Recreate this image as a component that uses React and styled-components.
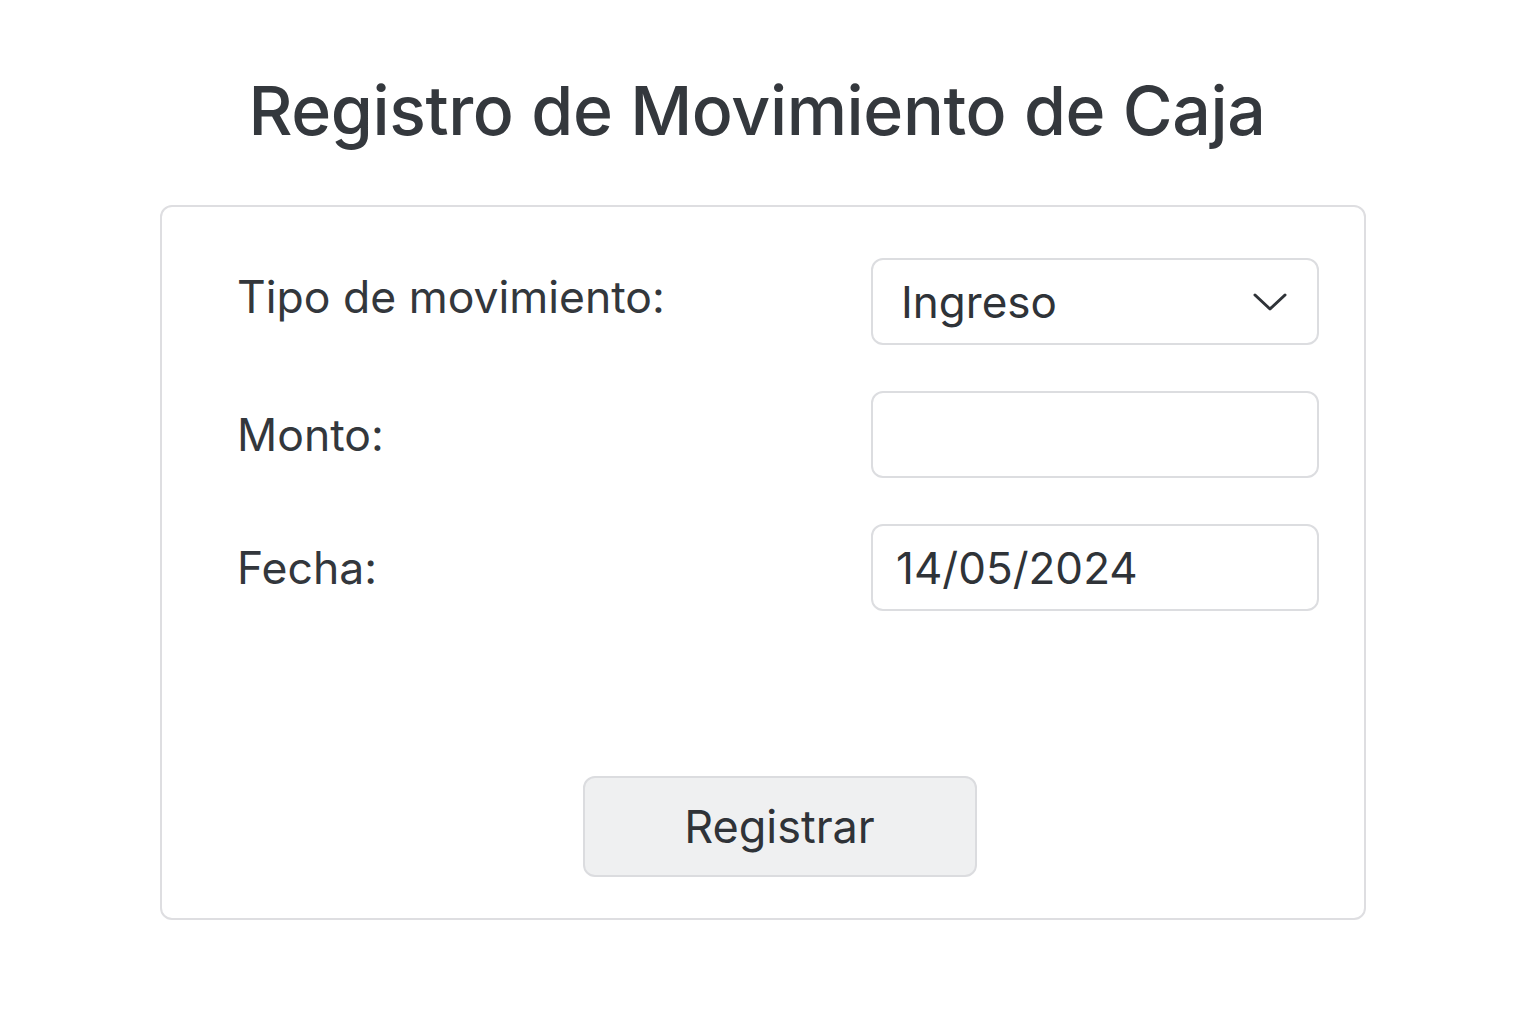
import React from "react";
import styled, { createGlobalStyle } from "styled-components";

const GlobalStyle = createGlobalStyle`
  body {
    margin: 0;
    background: #ffffff;
    font-family: Inter, "Noto Sans", sans-serif;
    color: #33373c;
  }
`;

const Page = styled.main`
  width: 1536px;
  display: flex;
  flex-direction: column;
  align-items: center;
  padding-top: 68px;
`;

const Title = styled.h1`
  margin: 0 0 53px 0;
  font-size: 68px;
  line-height: 84px;
  font-weight: 500;
  letter-spacing: -0.4px;
  color: #34383d;
  transform: translateX(-11px);
`;

const Card = styled.form`
  box-sizing: border-box;
  width: 1206px;
  margin-left: -10px;
  border: 2px solid #dedee1;
  border-radius: 12px;
  padding: 51px 45px 41px 75px;
  display: flex;
  flex-direction: column;
`;

const Fields = styled.div`
  display: grid;
  grid-template-columns: 1fr 448px;
  row-gap: 46px;
  align-items: center;
`;

const Label = styled.label`
  font-size: 44.5px;
  font-weight: 400;
  color: #33373c;
  align-self: ${p => (p.top ? "start" : "center")};
  padding-top: ${p => (p.top ? "12px" : "0")};
`;

const Field = styled.div`
  box-sizing: border-box;
  height: 87px;
  border: 2px solid #dcdde0;
  border-radius: 12px;
  background: #fff;
  display: flex;
  align-items: center;
  justify-content: space-between;
  padding: 0 30px 0 ${p => p.indent || 28}px;
  font-size: 44px;
  color: #2f3338;
`;

const Chevron = styled.svg`
  width: 34px;
  height: 20px;
`;

const Actions = styled.div`
  display: flex;
  justify-content: center;
  margin-top: 165px;
  padding-left: 3px;
`;

const Button = styled.button`
  box-sizing: border-box;
  width: 394px;
  height: 101px;
  background: #eff0f1;
  border: 2px solid #dbdcdf;
  border-radius: 12px;
  font-family: Inter, "Noto Sans", sans-serif;
  font-size: 45px;
  color: #2f3338;
`;

export default function App() {
  return (
    <>
      <GlobalStyle />
      <Page>
        <Title>Registro de Movimiento de Caja</Title>
        <Card>
          <Fields>
            <Label top>Tipo de movimiento:</Label>
            <Field>
              <span>Ingreso</span>
              <Chevron viewBox="0 0 34 20" fill="none">
                <path d="M2 3l15 14L32 3" stroke="#2f3338" strokeWidth="3" strokeLinecap="round" strokeLinejoin="round" />
              </Chevron>
            </Field>
            <Label>Monto:</Label>
            <Field />
            <Label>Fecha:</Label>
            <Field indent={23}>
              <span>14/05/2024</span>
            </Field>
          </Fields>
          <Actions>
            <Button type="button">Registrar</Button>
          </Actions>
        </Card>
      </Page>
    </>
  );
}
